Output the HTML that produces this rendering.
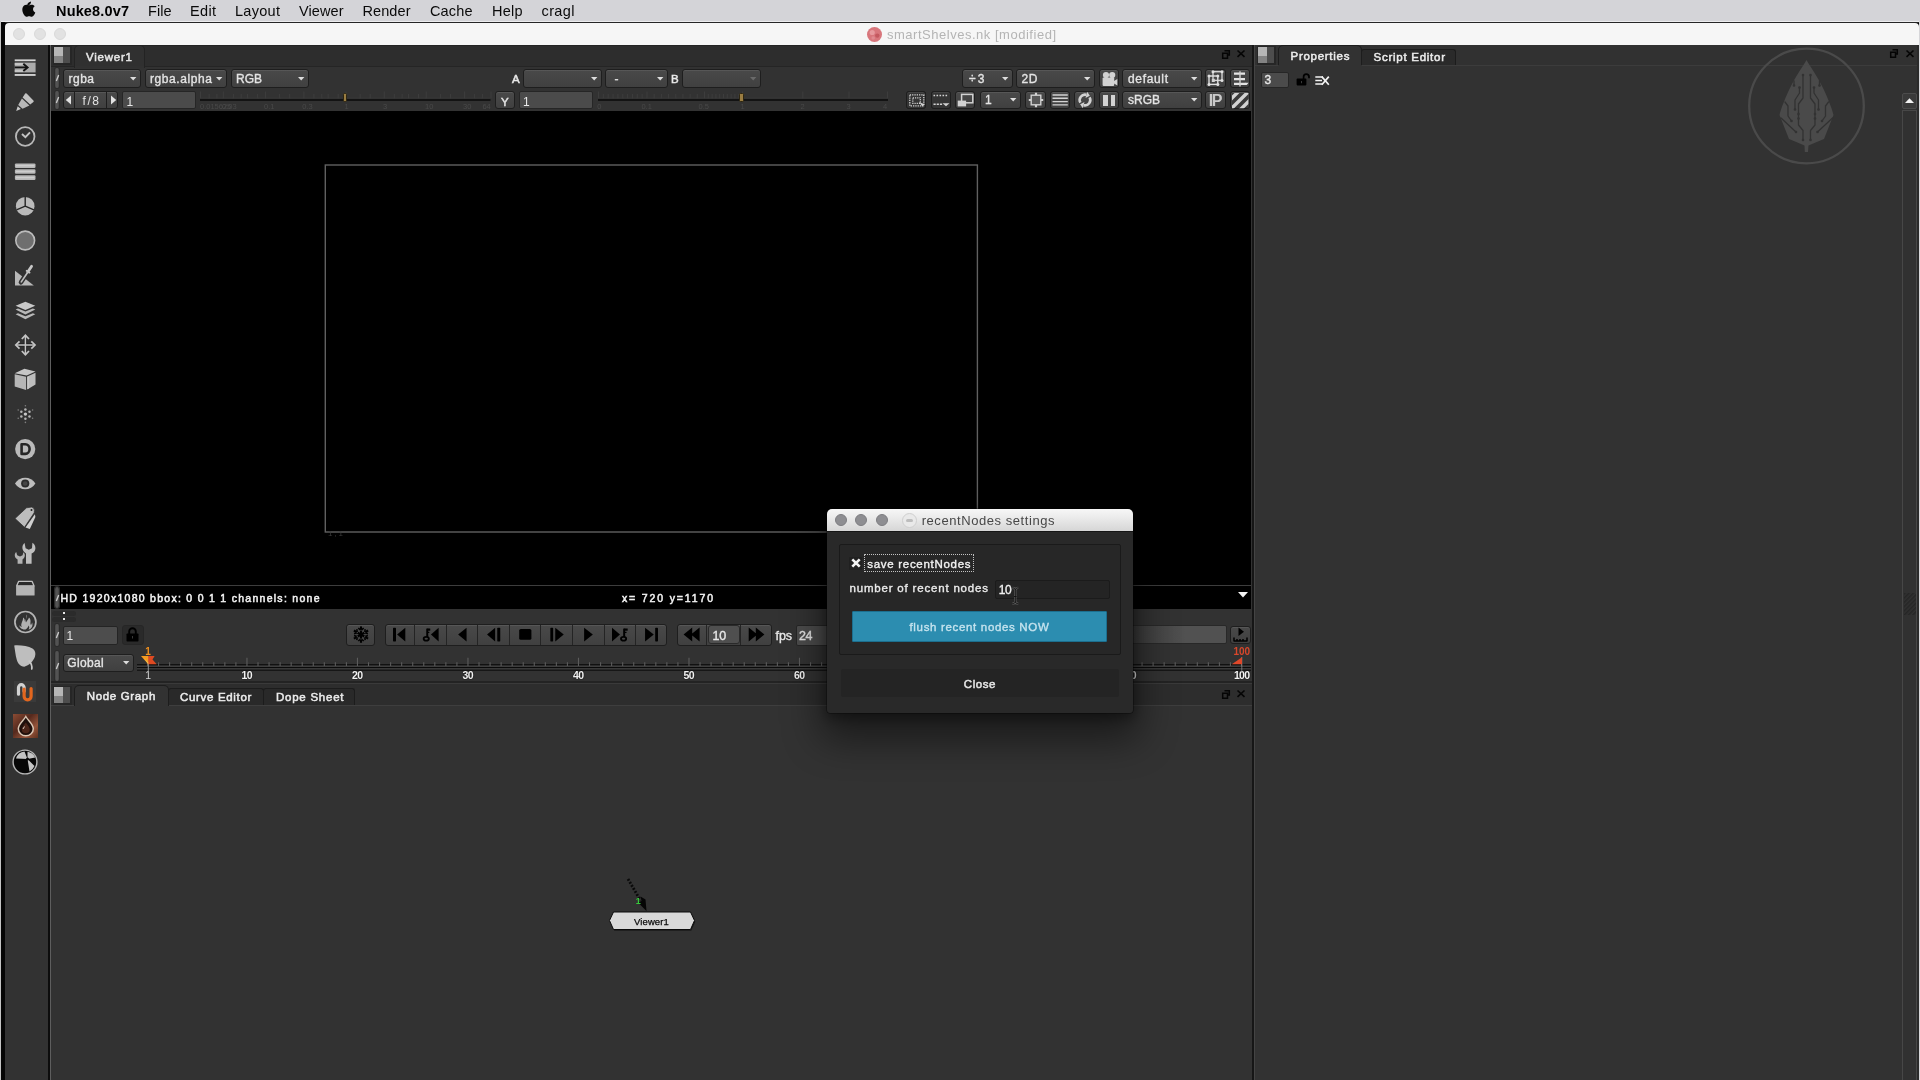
<!DOCTYPE html>
<html><head><meta charset="utf-8"><title>Nuke</title>
<style>
html,body{margin:0;padding:0;width:1920px;height:1080px;overflow:hidden;background:#000;}
body{position:relative;font-family:"Liberation Sans",sans-serif;}
div,span,svg{position:absolute;box-sizing:border-box;}
span{white-space:pre;will-change:opacity;}
svg{overflow:visible;}
.b{background:linear-gradient(#494949,#404040);border:1px solid #1e1e1e;border-radius:3px;box-shadow:inset 0 1px 0 rgba(255,255,255,.08);}
</style></head><body>
<div style="left:0px;top:0px;width:1920px;height:21px;background:#d4d4d8;"></div>
<div style="left:0px;top:20.7px;width:1920px;height:0.6999999999999993px;background:#ececee;"></div>
<div style="left:0px;top:21.5px;width:1919px;height:1.5px;background:#262626;"></div>
<div style="left:1919px;top:21px;width:1px;height:1059px;background:#d6d6d9;"></div>
<div style="left:0px;top:21px;width:1px;height:1059px;background:#c4c4c4;"></div>
<div style="left:1px;top:22px;width:4px;height:1058px;background:#050505;"></div>
<svg style="left:22px;top:1px;" width="14" height="18" viewBox="0 0 14 18"><path d="M9.6 4.3c.7-.9 1.2-2.1 1.1-3.3-1 .1-2.3.7-3 1.6-.7.8-1.3 2-1.1 3.2 1.100.1 2.300-.6 3-1.500zM12.900 9.800c0-2.200 1.800-3.200 1.900-3.300-1-1.500-2.600-1.700-3.200-1.700-1.400-.1-2.700.8-3.300.8-.7 0-1.800-.800-2.900-.800-1.500 0-2.900.9-3.600 2.200-1.600 2.700-.4 6.700 1.100 8.900.700 1.100 1.600 2.300 2.800 2.200 1.100 0 1.500-.7 2.900-.7 1.300 0 1.700.7 2.900.7 1.200 0 2-1.100 2.700-2.200.9-1.200 1.200-2.400 1.200-2.500 0 0-2.400-.9-2.500-3.600z" fill="#0a0a0a" transform="translate(-0.600,-0.500) scale(0.900)"/></svg>
<span style="left:56px;top:3px;font-size:14.5px;line-height:16px;color:#000;font-weight:700;letter-spacing:0.156px;">Nuke8.0v7</span>
<span style="left:148px;top:3px;font-size:14.5px;line-height:16px;color:#0a0a0a;letter-spacing:0.042px;">File</span>
<span style="left:190px;top:3px;font-size:14.5px;line-height:16px;color:#0a0a0a;letter-spacing:0.333px;">Edit</span>
<span style="left:235px;top:3px;font-size:14.5px;line-height:16px;color:#0a0a0a;letter-spacing:0.291px;">Layout</span>
<span style="left:299px;top:3px;font-size:14.5px;line-height:16px;color:#0a0a0a;letter-spacing:0.087px;">Viewer</span>
<span style="left:362.5px;top:3px;font-size:14.5px;line-height:16px;color:#0a0a0a;letter-spacing:0.087px;">Render</span>
<span style="left:430px;top:3px;font-size:14.5px;line-height:16px;color:#0a0a0a;letter-spacing:0.145px;">Cache</span>
<span style="left:492px;top:3px;font-size:14.5px;line-height:16px;color:#0a0a0a;letter-spacing:0.224px;">Help</span>
<span style="left:541.5px;top:3px;font-size:14.5px;line-height:16px;color:#0a0a0a;letter-spacing:0.391px;">cragl</span>
<div style="left:5px;top:23px;width:1914px;height:22px;background:#f6f6f6;border-radius:4px 4px 0 0;"></div>
<div style="left:13px;top:27.700000000000003px;width:12px;height:12px;border-radius:6px;background:#e2e2e2;border:1px solid #dadada"></div>
<div style="left:33.5px;top:27.700000000000003px;width:12px;height:12px;border-radius:6px;background:#e2e2e2;border:1px solid #dadada"></div>
<div style="left:54px;top:27.700000000000003px;width:12px;height:12px;border-radius:6px;background:#e2e2e2;border:1px solid #dadada"></div>
<div style="left:867px;top:26.5px;width:15px;height:15px;border-radius:8px;background:#d8767c;"></div>
<svg style="left:867px;top:26.5px;" width="15" height="15" viewBox="0 0 15 15"><circle cx="5.2" cy="5.5" r="2.6" fill="#e79a9e"/><circle cx="10.3" cy="8.6" r="2.2" fill="#c4585f"/><circle cx="6.2" cy="11" r="1.8" fill="#e08a90"/></svg>
<span style="left:887px;top:27px;font-size:13px;line-height:15px;color:#b4b4b4;letter-spacing:0.517px;">smartShelves.nk [modified]</span>
<div style="left:5px;top:45px;width:1914px;height:1035px;background:#323232;"></div>
<div style="left:48px;top:45px;width:2px;height:1035px;background:#0c0c0c;"></div>
<div style="left:50px;top:45px;width:1px;height:1035px;background:#5e5e5e;"></div>
<div style="left:51px;top:45px;width:1201px;height:22px;background:#2d2d2d;"></div>
<div style="left:51px;top:45px;width:1201px;height:1px;background:#242424;"></div>
<div style="left:51px;top:65.5px;width:1201px;height:1.5px;background:#252525;"></div>
<div style="left:75px;top:46px;width:69px;height:21px;background:#303030;border-radius:4px 4px 0 0;box-shadow:0 0 0 1px #232323;"></div>
<div style="left:75px;top:65.5px;width:69px;height:2.0px;background:#313131;"></div>
<div style="left:52.5px;top:45.5px;width:19.0px;height:19.0px;background:#262626;border-radius:1px;"></div>
<div style="left:54px;top:47px;width:16px;height:16px;background:#4d4d4d;"></div>
<div style="left:54px;top:47px;width:9px;height:9px;background:#b6b6b6;"></div>
<div style="left:54px;top:56px;width:9px;height:7px;background:#838383;"></div>
<span style="left:86px;top:51px;font-size:11.5px;line-height:12px;color:#e8e8e8;letter-spacing:0.776px;-webkit-text-stroke:0.5px;">Viewer1</span>
<svg style="left:1222px;top:49.5px;" width="8" height="9" viewBox="0 0 8 9"><path d="M2.5 0.7H7.3V5.0H5.6M0.7 3.2H5.5V8.2H0.7Z" fill="none" stroke="#050505" stroke-width="1.5"/></svg>
<svg style="left:1237.3px;top:50.2px;" width="8" height="8" viewBox="0 0 8 8"><path d="M0.500 0.500L7.500 6.900M7.500 0.500L0.500 6.900" stroke="#050505" stroke-width="1.600"/></svg>
<div style="left:55.3px;top:68px;width:4.200px;height:20px;border-radius:2.500px;background:linear-gradient(90deg,#444,#585858 50%,#444);box-shadow:0 0 0 1px #2b2b2b;"></div>
<svg style="left:55px;top:73.0px;" width="5" height="10" viewBox="0 0 5 10"><path d="M3.500 2.600L1.500 7.400" stroke="#c8c8c8" stroke-width="1.400" stroke-linecap="round"/></svg>
<div class="b" style="left:63px;top:68.6px;width:78px;height:19.400000000000006px;"></div>
<span style="left:68.5px;top:72px;font-size:12px;line-height:14px;color:#e4e4e4;letter-spacing:0.490px;-webkit-text-stroke:0.35px;">rgba</span>
<svg style="left:129.60000000000002px;top:76.7px;" width="6.4" height="3.6" viewBox="0 0 6.4 3.6"><path d="M0 0H6.4L3.2 3.6Z" fill="#ddd"/></svg>
<div class="b" style="left:145px;top:68.6px;width:82px;height:19.400000000000006px;"></div>
<span style="left:150px;top:72px;font-size:12px;line-height:14px;color:#e4e4e4;letter-spacing:0.587px;-webkit-text-stroke:0.35px;">rgba.alpha</span>
<svg style="left:216.0px;top:76.7px;" width="6.4" height="3.6" viewBox="0 0 6.4 3.6"><path d="M0 0H6.4L3.2 3.6Z" fill="#ddd"/></svg>
<div class="b" style="left:231px;top:68.6px;width:78px;height:19.400000000000006px;"></div>
<span style="left:236px;top:72px;font-size:12px;line-height:14px;color:#e4e4e4;letter-spacing:-0.008px;-webkit-text-stroke:0.35px;">RGB</span>
<svg style="left:297.6px;top:76.7px;" width="6.4" height="3.6" viewBox="0 0 6.4 3.6"><path d="M0 0H6.4L3.2 3.6Z" fill="#ddd"/></svg>
<span style="left:512px;top:73px;font-size:11.5px;line-height:12px;color:#e8e8e8;letter-spacing:0.000px;-webkit-text-stroke:0.5px;">A</span>
<div class="b" style="left:523px;top:68.6px;width:79px;height:19.400000000000006px;"></div>
<svg style="left:590.5999999999999px;top:76.7px;" width="6.4" height="3.6" viewBox="0 0 6.4 3.6"><path d="M0 0H6.4L3.2 3.6Z" fill="#ddd"/></svg>
<div class="b" style="left:605px;top:68.6px;width:63px;height:19.400000000000006px;"></div>
<span style="left:614.5px;top:72px;font-size:12px;line-height:14px;color:#e4e4e4;letter-spacing:0.000px;-webkit-text-stroke:0.35px;">-</span>
<svg style="left:656.5999999999999px;top:76.7px;" width="6.4" height="3.6" viewBox="0 0 6.4 3.6"><path d="M0 0H6.4L3.2 3.6Z" fill="#ddd"/></svg>
<span style="left:671px;top:73px;font-size:11.5px;line-height:12px;color:#e8e8e8;letter-spacing:0.000px;-webkit-text-stroke:0.5px;">B</span>
<div class="b" style="left:682px;top:68.6px;width:79px;height:19.400000000000006px;"></div>
<svg style="left:749.5999999999999px;top:76.7px;" width="6.4" height="3.6" viewBox="0 0 6.4 3.6"><path d="M0 0H6.4L3.2 3.6Z" fill="#6a6a6a"/></svg>
<div class="b" style="left:962px;top:68.6px;width:51px;height:19.400000000000006px;"></div>
<span style="left:969px;top:72px;font-size:12px;line-height:14px;color:#e4e4e4;letter-spacing:2.234px;-webkit-text-stroke:0.35px;">÷3</span>
<svg style="left:1001.5999999999999px;top:76.7px;" width="6.4" height="3.6" viewBox="0 0 6.4 3.6"><path d="M0 0H6.4L3.2 3.6Z" fill="#ddd"/></svg>
<div class="b" style="left:1016px;top:68.6px;width:79px;height:19.400000000000006px;"></div>
<span style="left:1021.5px;top:72px;font-size:12px;line-height:14px;color:#e4e4e4;letter-spacing:0.656px;-webkit-text-stroke:0.35px;">2D</span>
<svg style="left:1083.6px;top:76.7px;" width="6.4" height="3.6" viewBox="0 0 6.4 3.6"><path d="M0 0H6.4L3.2 3.6Z" fill="#ddd"/></svg>
<div class="b" style="left:1099px;top:68.6px;width:20px;height:19.400000000000006px;"></div>
<div class="b" style="left:1122px;top:68.6px;width:80px;height:19.400000000000006px;"></div>
<span style="left:1128px;top:72px;font-size:12px;line-height:14px;color:#e4e4e4;letter-spacing:0.661px;-webkit-text-stroke:0.35px;">default</span>
<svg style="left:1190.6px;top:76.7px;" width="6.4" height="3.6" viewBox="0 0 6.4 3.6"><path d="M0 0H6.4L3.2 3.6Z" fill="#ddd"/></svg>
<div class="b" style="left:1205px;top:68.6px;width:21px;height:19.400000000000006px;"></div>
<div class="b" style="left:1230px;top:68.6px;width:20px;height:19.400000000000006px;"></div>
<div style="left:55.3px;top:91px;width:4.200px;height:18px;border-radius:2.500px;background:linear-gradient(90deg,#444,#585858 50%,#444);box-shadow:0 0 0 1px #2b2b2b;"></div>
<svg style="left:55px;top:95.0px;" width="5" height="10" viewBox="0 0 5 10"><path d="M3.500 2.600L1.500 7.400" stroke="#c8c8c8" stroke-width="1.400" stroke-linecap="round"/></svg>
<div class="b" style="left:63px;top:91px;width:12px;height:18px;border-radius:3px 0 0 3px;"></div>
<div class="b" style="left:74px;top:91px;width:33px;height:18px;border-radius:0;"></div>
<div class="b" style="left:106px;top:91px;width:12px;height:18px;border-radius:0 3px 3px 0;"></div>
<svg style="left:65px;top:95px;" width="7" height="10" viewBox="0 0 7 10"><path d="M6 0.5V9.5L0.8 5Z" fill="#e2e2e2"/></svg>
<svg style="left:109.5px;top:95px;" width="7" height="10" viewBox="0 0 7 10"><path d="M1 0.5V9.5L6.2 5Z" fill="#e2e2e2"/></svg>
<span style="left:82.5px;top:94px;font-size:12px;line-height:14px;color:#e4e4e4;letter-spacing:1.578px;">f/8</span>
<div style="left:122px;top:91px;width:74px;height:18px;background:#4b4b4b;border:1px solid #262626;border-radius:2px;"></div>
<span style="left:126.5px;top:95px;font-size:12px;line-height:14px;color:#e8e8e8;letter-spacing:0.000px;">1</span>
<div class="b" style="left:495px;top:91px;width:20px;height:18px;"></div>
<span style="left:501px;top:96px;font-size:11.5px;line-height:12px;color:#e0e0e0;letter-spacing:0.000px;-webkit-text-stroke:0.5px;">Y</span>
<div style="left:519px;top:91px;width:74px;height:18px;background:#4b4b4b;border:1px solid #262626;border-radius:2px;"></div>
<span style="left:523px;top:95px;font-size:12px;line-height:14px;color:#e8e8e8;letter-spacing:0.000px;">1</span>
<svg style="left:199.5px;top:0px;" width="292.5" height="110" viewBox="0 0 292.5 110"><path d="M0.50 91.5V98.5" stroke="#3d3d3d" stroke-width="1"/><path d="M9.14 94V98.5" stroke="#3d3d3d" stroke-width="1"/><path d="M16.94 94V98.5" stroke="#3d3d3d" stroke-width="1"/><path d="M23.32 91.5V98.5" stroke="#3d3d3d" stroke-width="1"/><path d="M33.39 94V98.5" stroke="#3d3d3d" stroke-width="1"/><path d="M41.19 94V98.5" stroke="#3d3d3d" stroke-width="1"/><path d="M47.57 94V98.5" stroke="#3d3d3d" stroke-width="1"/><path d="M57.64 94V98.5" stroke="#3d3d3d" stroke-width="1"/><path d="M65.44 91.5V98.5" stroke="#3d3d3d" stroke-width="1"/><path d="M79.63 94V98.5" stroke="#3d3d3d" stroke-width="1"/><path d="M89.69 94V98.5" stroke="#3d3d3d" stroke-width="1"/><path d="M103.88 91.5V98.5" stroke="#3d3d3d" stroke-width="1"/><path d="M113.94 94V98.5" stroke="#3d3d3d" stroke-width="1"/><path d="M121.75 94V98.5" stroke="#3d3d3d" stroke-width="1"/><path d="M128.13 94V98.5" stroke="#3d3d3d" stroke-width="1"/><path d="M138.19 94V98.5" stroke="#3d3d3d" stroke-width="1"/><path d="M146.00 91.5V98.5" stroke="#3d3d3d" stroke-width="1"/><path d="M160.14 94V98.5" stroke="#3d3d3d" stroke-width="1"/><path d="M170.17 94V98.5" stroke="#3d3d3d" stroke-width="1"/><path d="M184.30 91.5V98.5" stroke="#3d3d3d" stroke-width="1"/><path d="M194.33 94V98.5" stroke="#3d3d3d" stroke-width="1"/><path d="M202.11 94V98.5" stroke="#3d3d3d" stroke-width="1"/><path d="M208.47 94V98.5" stroke="#3d3d3d" stroke-width="1"/><path d="M218.50 94V98.5" stroke="#3d3d3d" stroke-width="1"/><path d="M226.28 91.5V98.5" stroke="#3d3d3d" stroke-width="1"/><path d="M240.42 94V98.5" stroke="#3d3d3d" stroke-width="1"/><path d="M250.45 94V98.5" stroke="#3d3d3d" stroke-width="1"/><path d="M264.58 91.5V98.5" stroke="#3d3d3d" stroke-width="1"/><path d="M274.61 94V98.5" stroke="#3d3d3d" stroke-width="1"/><path d="M282.39 94V98.5" stroke="#3d3d3d" stroke-width="1"/><path d="M291.00 91.5V98.5" stroke="#3d3d3d" stroke-width="1"/><path d="M0 99.8H290.5" stroke="#131313" stroke-width="2.2"/><path d="M0 98.2H290.5" stroke="#3e3e3e" stroke-width="0.8"/></svg>
<span style="left:200px;top:102px;font-size:7.5px;line-height:9px;color:#494949;letter-spacing:0.000px;">0.015625</span>
<span style="left:222px;top:102px;font-size:7.5px;line-height:9px;color:#494949;letter-spacing:0.000px;">0.03</span>
<span style="left:264px;top:102px;font-size:7.5px;line-height:9px;color:#494949;letter-spacing:0.000px;">0.1</span>
<span style="left:302.3px;top:102px;font-size:7.5px;line-height:9px;color:#494949;letter-spacing:0.000px;">0.3</span>
<span style="left:344.5px;top:102px;font-size:7.5px;line-height:9px;color:#494949;letter-spacing:0.000px;">1</span>
<span style="left:383px;top:102px;font-size:7.5px;line-height:9px;color:#494949;letter-spacing:0.000px;">3</span>
<span style="left:425px;top:102px;font-size:7.5px;line-height:9px;color:#494949;letter-spacing:0.000px;">10</span>
<span style="left:463px;top:102px;font-size:7.5px;line-height:9px;color:#494949;letter-spacing:0.000px;">30</span>
<span style="left:482.4px;top:102px;font-size:7.5px;line-height:9px;color:#494949;letter-spacing:0.000px;">64</span>
<div style="left:342.6px;top:93.2px;width:4.399999999999977px;height:9.200000000000003px;background:#9a7d42;border:1px solid #2e2610;border-radius:1.5px;"></div>
<svg style="left:597.5px;top:0px;" width="292.0" height="110" viewBox="0 0 292.0 110"><path d="M0.50 91.5V98.5" stroke="#3d3d3d" stroke-width="1"/><path d="M5.35 94V98.5" stroke="#3d3d3d" stroke-width="1"/><path d="M10.20 94V98.5" stroke="#3d3d3d" stroke-width="1"/><path d="M15.05 94V98.5" stroke="#3d3d3d" stroke-width="1"/><path d="M19.90 94V98.5" stroke="#3d3d3d" stroke-width="1"/><path d="M24.75 94V98.5" stroke="#3d3d3d" stroke-width="1"/><path d="M29.60 94V98.5" stroke="#3d3d3d" stroke-width="1"/><path d="M34.45 94V98.5" stroke="#3d3d3d" stroke-width="1"/><path d="M39.30 94V98.5" stroke="#3d3d3d" stroke-width="1"/><path d="M44.15 94V98.5" stroke="#3d3d3d" stroke-width="1"/><path d="M49.00 91.5V98.5" stroke="#3d3d3d" stroke-width="1"/><path d="M56.19 94V98.5" stroke="#3d3d3d" stroke-width="1"/><path d="M63.38 94V98.5" stroke="#3d3d3d" stroke-width="1"/><path d="M70.56 94V98.5" stroke="#3d3d3d" stroke-width="1"/><path d="M77.75 94V98.5" stroke="#3d3d3d" stroke-width="1"/><path d="M84.94 94V98.5" stroke="#3d3d3d" stroke-width="1"/><path d="M92.12 94V98.5" stroke="#3d3d3d" stroke-width="1"/><path d="M99.31 94V98.5" stroke="#3d3d3d" stroke-width="1"/><path d="M106.50 91.5V98.5" stroke="#3d3d3d" stroke-width="1"/><path d="M110.30 94V98.5" stroke="#3d3d3d" stroke-width="1"/><path d="M114.10 94V98.5" stroke="#3d3d3d" stroke-width="1"/><path d="M117.90 94V98.5" stroke="#3d3d3d" stroke-width="1"/><path d="M121.70 94V98.5" stroke="#3d3d3d" stroke-width="1"/><path d="M125.50 94V98.5" stroke="#3d3d3d" stroke-width="1"/><path d="M129.30 94V98.5" stroke="#3d3d3d" stroke-width="1"/><path d="M133.10 94V98.5" stroke="#3d3d3d" stroke-width="1"/><path d="M136.90 94V98.5" stroke="#3d3d3d" stroke-width="1"/><path d="M140.70 94V98.5" stroke="#3d3d3d" stroke-width="1"/><path d="M144.50 91.5V98.5" stroke="#3d3d3d" stroke-width="1"/><path d="M204.80 91.5V98.5" stroke="#3d3d3d" stroke-width="1"/><path d="M251.00 91.5V98.5" stroke="#3d3d3d" stroke-width="1"/><path d="M289.50 91.5V98.5" stroke="#3d3d3d" stroke-width="1"/><path d="M0 99.8H290.0" stroke="#131313" stroke-width="2.2"/><path d="M0 98.2H290.0" stroke="#3e3e3e" stroke-width="0.8"/></svg>
<span style="left:597.3px;top:102px;font-size:7.5px;line-height:9px;color:#494949;letter-spacing:0.000px;">0</span>
<span style="left:641.4px;top:102px;font-size:7.5px;line-height:9px;color:#494949;letter-spacing:0.000px;">0.1</span>
<span style="left:698.6px;top:102px;font-size:7.5px;line-height:9px;color:#494949;letter-spacing:0.000px;">0.5</span>
<span style="left:740.5px;top:102px;font-size:7.5px;line-height:9px;color:#494949;letter-spacing:0.000px;">1</span>
<span style="left:800.5px;top:102px;font-size:7.5px;line-height:9px;color:#494949;letter-spacing:0.000px;">2</span>
<span style="left:846.5px;top:102px;font-size:7.5px;line-height:9px;color:#494949;letter-spacing:0.000px;">3</span>
<span style="left:883px;top:102px;font-size:7.5px;line-height:9px;color:#494949;letter-spacing:0.000px;">4</span>
<div style="left:739.4px;top:93.2px;width:4.400000000000091px;height:9.200000000000003px;background:#9a7d42;border:1px solid #2e2610;border-radius:1.5px;"></div>
<div class="b" style="left:906px;top:91px;width:20px;height:18px;"></div>
<div class="b" style="left:931px;top:91px;width:20px;height:18px;"></div>
<div class="b" style="left:955px;top:91px;width:20px;height:18px;"></div>
<div class="b" style="left:1025px;top:91px;width:21px;height:18px;"></div>
<div class="b" style="left:1050px;top:91px;width:20px;height:18px;"></div>
<div class="b" style="left:1074px;top:91px;width:21px;height:18px;"></div>
<div class="b" style="left:1099px;top:91px;width:20px;height:18px;"></div>
<div class="b" style="left:1205px;top:91px;width:21px;height:18px;"></div>
<div class="b" style="left:1230px;top:91px;width:20px;height:18px;"></div>
<div class="b" style="left:980px;top:91px;width:41px;height:18px;"></div>
<span style="left:985px;top:93px;font-size:12px;line-height:14px;color:#e4e4e4;letter-spacing:0.000px;-webkit-text-stroke:0.35px;">1</span>
<svg style="left:1009.5999999999999px;top:98.4px;" width="6.4" height="3.6" viewBox="0 0 6.4 3.6"><path d="M0 0H6.4L3.2 3.6Z" fill="#ddd"/></svg>
<div class="b" style="left:1122px;top:91px;width:80px;height:18px;"></div>
<span style="left:1128px;top:93px;font-size:12px;line-height:14px;color:#e4e4e4;letter-spacing:-0.005px;-webkit-text-stroke:0.35px;">sRGB</span>
<svg style="left:1190.6px;top:98.4px;" width="6.4" height="3.6" viewBox="0 0 6.4 3.6"><path d="M0 0H6.4L3.2 3.6Z" fill="#ddd"/></svg>
<div style="left:51px;top:111px;width:1199.5px;height:474px;background:#000;"></div>
<div style="left:51px;top:585px;width:1199.5px;height:1px;background:#3d3d3d;"></div>
<div style="left:51px;top:586px;width:1199.5px;height:23px;background:#000;"></div>
<svg style="left:320px;top:160px;" width="662" height="378" viewBox="0 0 662 378"><rect x="5.300" y="5" width="652.100" height="367" fill="none" stroke="#606060" stroke-width="1.400"/></svg>
<span style="left:328px;top:529px;font-size:8px;line-height:9px;color:#3a3a3a;letter-spacing:1.938px;">1,1</span>
<div style="left:55.3px;top:587px;width:4.200px;height:21px;border-radius:2.500px;background:linear-gradient(90deg,#444,#585858 50%,#444);box-shadow:0 0 0 1px #2b2b2b;"></div>
<svg style="left:55px;top:592.5px;" width="5" height="10" viewBox="0 0 5 10"><path d="M3.500 2.600L1.500 7.400" stroke="#c8c8c8" stroke-width="1.400" stroke-linecap="round"/></svg>
<span style="left:60.5px;top:592px;font-size:10.5px;line-height:12px;color:#f2f2f2;letter-spacing:1.279px;-webkit-text-stroke:0.5px;">HD 1920x1080 bbox: 0 0 1 1 channels: none</span>
<span style="left:622px;top:592px;font-size:10.5px;line-height:12px;color:#f2f2f2;letter-spacing:1.858px;-webkit-text-stroke:0.5px;">x= 720 y=1170</span>
<svg style="left:1237.5px;top:592.3px;" width="10" height="6" viewBox="0 0 10 6"><path d="M0 0H10L5 5.6Z" fill="#f4f4f4"/></svg>
<div style="left:1252px;top:45px;width:2px;height:1035px;background:#161616;"></div>
<div style="left:1254px;top:45px;width:1px;height:1035px;background:#444;"></div>
<svg style="left:1101.5px;top:70.5px;" width="16" height="16" viewBox="0 0 16 16"><circle cx="4" cy="4" r="3.1" fill="#d2d2d2"/><circle cx="10.2" cy="4" r="3.1" fill="#d2d2d2"/><rect x="0.6" y="6.4" width="11.6" height="8.6" rx="1" fill="#d2d2d2"/><path d="M12 10L15.3 8V14.600L12 12.600Z" fill="#d2d2d2"/></svg>
<svg style="left:1207px;top:70px;" width="17" height="17" viewBox="0 0 17 17"><rect x="6" y="1.700" width="9" height="8.700" fill="none" stroke="#d2d2d2" stroke-width="1.400"/><rect x="2" y="6" width="8.800" height="8.400" fill="none" stroke="#e0e0e0" stroke-width="1.400"/><circle cx="6" cy="1.7" r="1.500" fill="#e0e0e0"/><circle cx="15" cy="1.7" r="1.500" fill="#e0e0e0"/><circle cx="15" cy="10.4" r="1.500" fill="#e0e0e0"/><circle cx="2" cy="6" r="1.500" fill="#e0e0e0"/><circle cx="2" cy="14.4" r="1.500" fill="#e0e0e0"/><circle cx="10.8" cy="14.4" r="1.500" fill="#e0e0e0"/><circle cx="10.8" cy="6" r="1.500" fill="#e0e0e0"/><rect x="4.800" y="8.800" width="3" height="3.200" fill="#d2d2d2"/></svg>
<svg style="left:1233px;top:70.5px;" width="16" height="16" viewBox="0 0 16 16"><path d="M1 2.600H12M1 8.100H12M1 12.900H12.500" stroke="#e4e4e4" stroke-width="2.400"/><path d="M12 11.700H15.600L13.700 14.100H12Z" fill="#e4e4e4"/><path d="M7 0.300V15.600" stroke="#d2d2d2" stroke-width="1.400"/></svg>
<div class="b" style="left:906px;top:91px;width:20px;height:18px;background:#353535;"></div>
<div class="b" style="left:931px;top:91px;width:20px;height:18px;background:#353535;"></div>
<svg style="left:909px;top:93.5px;" width="16" height="13" viewBox="0 0 16 13"><rect x="0.8" y="0.8" width="14" height="11" fill="none" stroke="#d2d2d2" stroke-width="1.3" stroke-dasharray="1.300 1"/><rect x="3.800" y="3.800" width="7.500" height="5.500" fill="none" stroke="#d2d2d2" stroke-width="1.200" stroke-dasharray="1.200 1"/><path d="M10 8L15.500 10.200L13.500 12.500Z" fill="#d2d2d2"/></svg>
<svg style="left:933px;top:93px;" width="17" height="14" viewBox="0 0 17 14"><path d="M0.500 2.500H15.500" stroke="#d2d2d2" stroke-width="1.500" stroke-dasharray="1.600 1.400"/><path d="M0.500 11.200H10" stroke="#d2d2d2" stroke-width="1.400" stroke-dasharray="2.200 1"/><path d="M9.500 10.200H16.500L13 13.200Z" fill="#d2d2d2"/></svg>
<svg style="left:957px;top:93px;" width="17" height="14" viewBox="0 0 17 14"><rect x="4.600" y="1.400" width="11.200" height="8.400" fill="none" stroke="#d2d2d2" stroke-width="1.500"/><rect x="0.700" y="7.600" width="8.400" height="5.800" fill="#d2d2d2"/></svg>
<svg style="left:1028px;top:92px;" width="16" height="16" viewBox="0 0 16 16"><rect x="3.200" y="3.200" width="9.600" height="9.600" fill="#585858" stroke="#d2d2d2" stroke-width="1.400"/><path d="M8 0.800V3M8 13V15.200M0.800 8H3M13 8H15.200" stroke="#d2d2d2" stroke-width="2.200"/></svg>
<svg style="left:1052px;top:93px;" width="17" height="14" viewBox="0 0 17 14"><path d="M0.500 2H15.800M0.500 5.300H15.800M0.500 8.600H15.800M0.500 11.900H15.800" stroke="#d2d2d2" stroke-width="1.400"/></svg>
<svg style="left:1076.8px;top:91.8px;" width="16" height="16" viewBox="0 0 16 16"><path d="M3.41 10.65A5.300 5.300 0 0 1 9.37 2.88" fill="none" stroke="#d2d2d2" stroke-width="2.600"/><path d="M10.23 -0.31L12.85 3.81L8.52 6.07Z" fill="#d2d2d2"/><path d="M12.59 5.35A5.300 5.300 0 0 1 6.63 13.12" fill="none" stroke="#d2d2d2" stroke-width="2.600"/><path d="M5.77 16.31L3.15 12.19L7.48 9.93Z" fill="#d2d2d2"/></svg>
<div style="left:1103px;top:94.5px;width:4.5px;height:11.5px;background:#d2d2d2;"></div>
<div style="left:1110.8px;top:94.5px;width:4.600000000000136px;height:11.5px;background:#d2d2d2;"></div>
<span style="left:1208.8px;top:92px;font-size:16px;line-height:17px;color:#cacaca;font-weight:700;letter-spacing:-1.425px;">IP</span>
<svg style="left:1232px;top:92.8px;" width="16.4" height="15.2" viewBox="0 0 16.4 15.2"><defs><clipPath id="sc"><rect x="0" y="0" width="16.400" height="15.200"/></clipPath></defs><g clip-path="url(#sc)"><rect width="16.400" height="15.200" fill="#3a3a3a"/><path d="M-4 9L9 -4M-2 17L17 -2M6 19L19 6" stroke="#d2d2d2" stroke-width="3.400"/></g></svg>
<div style="left:52px;top:610.500px;width:24px;height:5px;border-radius:3px;background:#2b2b2b;"></div>
<div style="left:52px;top:616.500px;width:24px;height:5px;border-radius:3px;background:#2b2b2b;"></div>
<div style="left:63.3px;top:612px;width:1.7000000000000028px;height:1.6000000000000227px;background:#e8e8e8;"></div>
<div style="left:63.3px;top:618px;width:1.7000000000000028px;height:1.6000000000000227px;background:#e8e8e8;"></div>
<div style="left:55.3px;top:624px;width:4.200px;height:22px;border-radius:2.500px;background:linear-gradient(90deg,#444,#585858 50%,#444);box-shadow:0 0 0 1px #2b2b2b;"></div>
<svg style="left:55px;top:630.0px;" width="5" height="10" viewBox="0 0 5 10"><path d="M3.500 2.600L1.500 7.400" stroke="#c8c8c8" stroke-width="1.400" stroke-linecap="round"/></svg>
<div style="left:63px;top:625.5px;width:55px;height:19.0px;background:#4d4d4d;border:1px solid #242424;border-radius:2px;"></div>
<span style="left:66.5px;top:629px;font-size:12px;line-height:14px;color:#e8e8e8;letter-spacing:0.000px;">1</span>
<div style="left:121.5px;top:624.5px;width:22.0px;height:20.0px;background:#2a2a2a;border:1px solid #262626;border-radius:3px;"></div>
<svg style="left:125px;top:627px;" width="15" height="15" viewBox="0 0 15 15"><rect x="1.500" y="6.500" width="12" height="8" rx="0.800" fill="#000"/><path d="M4.200 7V4.600A3.300 3.300 0 0 1 10.800 4.600V7" fill="none" stroke="#000" stroke-width="1.900"/><rect x="7" y="9" width="1" height="2.500" fill="#3a3a3a"/></svg>
<div class="b" style="left:345.5px;top:624.4px;width:29.5px;height:21.800000000000068px;"></div>
<svg style="left:352.6px;top:626px;" width="16" height="17.2" viewBox="0 0 16 17.2"><g transform="rotate(0 8 8.6)"><path d="M8 8.6V0.4" stroke="#000" stroke-width="2.1"/><path d="M8 4.4L5.3 2.2M8 4.4L10.7 2.2" stroke="#000" stroke-width="1.5"/></g><g transform="rotate(60 8 8.6)"><path d="M8 8.6V0.4" stroke="#000" stroke-width="2.1"/><path d="M8 4.4L5.3 2.2M8 4.4L10.7 2.2" stroke="#000" stroke-width="1.5"/></g><g transform="rotate(120 8 8.6)"><path d="M8 8.6V0.4" stroke="#000" stroke-width="2.1"/><path d="M8 4.4L5.3 2.2M8 4.4L10.7 2.2" stroke="#000" stroke-width="1.5"/></g><g transform="rotate(180 8 8.6)"><path d="M8 8.6V0.4" stroke="#000" stroke-width="2.1"/><path d="M8 4.4L5.3 2.2M8 4.4L10.7 2.2" stroke="#000" stroke-width="1.5"/></g><g transform="rotate(240 8 8.6)"><path d="M8 8.6V0.4" stroke="#000" stroke-width="2.1"/><path d="M8 4.4L5.3 2.2M8 4.4L10.7 2.2" stroke="#000" stroke-width="1.5"/></g><g transform="rotate(300 8 8.6)"><path d="M8 8.6V0.4" stroke="#000" stroke-width="2.1"/><path d="M8 4.4L5.3 2.2M8 4.4L10.7 2.2" stroke="#000" stroke-width="1.5"/></g><circle cx="8" cy="8.6" r="2.2" fill="#000"/><circle cx="11.72" cy="10.75" r="0.65" fill="#4a4a4a"/><circle cx="8.00" cy="12.90" r="0.65" fill="#4a4a4a"/><circle cx="4.28" cy="10.75" r="0.65" fill="#4a4a4a"/><circle cx="4.28" cy="6.45" r="0.65" fill="#4a4a4a"/><circle cx="8.00" cy="4.30" r="0.65" fill="#4a4a4a"/><circle cx="11.72" cy="6.45" r="0.65" fill="#4a4a4a"/></svg>
<div class="b" style="left:384.5px;top:624.4px;width:282.4px;height:21.8px;"></div>
<div style="left:414.0px;top:625.4px;width:1.1000000000000227px;height:19.800000000000068px;background:#242424;"></div>
<div style="left:445.9px;top:625.4px;width:1.1000000000000227px;height:19.800000000000068px;background:#242424;"></div>
<div style="left:476.8px;top:625.4px;width:1.1000000000000227px;height:19.800000000000068px;background:#242424;"></div>
<div style="left:508.9px;top:625.4px;width:1.1000000000000227px;height:19.800000000000068px;background:#242424;"></div>
<div style="left:540.3px;top:625.4px;width:1.1000000000000227px;height:19.800000000000068px;background:#242424;"></div>
<div style="left:572.2px;top:625.4px;width:1.1000000000000227px;height:19.800000000000068px;background:#242424;"></div>
<div style="left:603.5px;top:625.4px;width:1.1000000000000227px;height:19.800000000000068px;background:#242424;"></div>
<div style="left:635.25px;top:625.4px;width:1.1000000000000227px;height:19.800000000000068px;background:#242424;"></div>
<svg style="left:0px;top:0px;" width="700" height="660" viewBox="0 0 700 660"><rect x="393.00" y="627.8" width="3.00" height="13.60" rx="0.6" fill="#000"/><path d="M405.30 627.8V641.4L397.10 634.6Z" fill="#000"/><ellipse cx="426.25" cy="638.7" rx="2.6" ry="1.9" fill="none" stroke="#000" stroke-width="1.8"/><path d="M427.25 637V628.6" stroke="#000" stroke-width="2"/><path d="M427.25 629.6H430.25" stroke="#000" stroke-width="2.2"/><path d="M427.25 632.4H429.35" stroke="#000" stroke-width="1.2"/><path d="M438.65 627.8V641.4L430.95 634.6Z" fill="#000"/><path d="M466.55 627.8V641.4L458.15 634.6Z" fill="#000"/><path d="M495.15 627.8V641.4L487.05 634.6Z" fill="#000"/><rect x="497.25" y="627.8" width="3.00" height="13.60" rx="0.6" fill="#000"/><rect x="519.2" y="629" width="12.2" height="10.8" rx="1.6" fill="#000"/><rect x="550.35" y="627.8" width="2.80" height="13.60" rx="0.6" fill="#000"/><path d="M555.25 627.8V641.4L563.75 634.6Z" fill="#000"/><path d="M584.15 627.8V641.4L592.85 634.6Z" fill="#000"/><path d="M611.98 627.8V641.4L619.98 634.6Z" fill="#000"/><ellipse cx="623.58" cy="638.7" rx="2.6" ry="1.9" fill="none" stroke="#000" stroke-width="1.8"/><path d="M624.17 637V628.6" stroke="#000" stroke-width="2"/><path d="M624.17 629.6H627.67" stroke="#000" stroke-width="2.2"/><path d="M624.17 632.4H626.52" stroke="#000" stroke-width="1.2"/><path d="M645.08 627.8V641.4L653.78 634.6Z" fill="#000"/><rect x="655.18" y="627.8" width="2.80" height="13.60" rx="0.6" fill="#000"/></svg>
<div class="b" style="left:676.500px;top:624.200px;width:95.79999999999995px;height:22px;"></div>
<div style="left:705.6px;top:625.2px;width:1.1000000000000227px;height:20.0px;background:#242424;"></div>
<div style="left:739.8px;top:625.2px;width:1.1000000000000227px;height:20.0px;background:#242424;"></div>
<div style="left:707.8px;top:625.2px;width:31.800000000000068px;height:19.0px;background:#4f4f4f;border:1px solid #2a2a2a;border-radius:3px;"></div>
<svg style="left:0px;top:0px;" width="800" height="660" viewBox="0 0 800 660"><path d="M692.200 627.400V641.400L683.600 634.400ZM699.600 627.400V641.400L691 634.400Z" fill="#000"/><path d="M748.700 627.400V641.400L757.300 634.400ZM755.800 627.400V641.400L764.400 634.400Z" fill="#000"/></svg>
<span style="left:712.6px;top:629px;font-size:12.5px;line-height:14px;color:#e8e8e8;letter-spacing:-0.206px;-webkit-text-stroke:0.35px;">10</span>
<span style="left:775.5px;top:629px;font-size:12.5px;line-height:14px;color:#e8e8e8;letter-spacing:-0.094px;-webkit-text-stroke:0.35px;">fps</span>
<div style="left:795.6px;top:625px;width:54.39999999999998px;height:21px;background:#4c4c4c;border:1px solid #262626;border-radius:2px;"></div>
<span style="left:798.9px;top:629px;font-size:12.5px;line-height:14px;color:#e4e4e4;letter-spacing:-0.306px;-webkit-text-stroke:0.35px;">24</span>
<div style="left:1090px;top:624.5px;width:136.5px;height:19.0px;background:linear-gradient(90deg,#3a3a3a 0%,#3a3a3a 30%,#515151 70%);border:1px solid #282828;border-radius:2px;"></div>
<div class="b" style="left:1230px;top:625.5px;width:20.5px;height:18.5px;"></div>
<svg style="left:1232px;top:627px;" width="17" height="16" viewBox="0 0 17 16"><path d="M6.500 0.500V9L12 4.700Z" fill="#000"/><path d="M1.500 14H15.500M2 14V10.500M5 14V12M8 14V12M11 14V12M15 14V10.500" stroke="#000" stroke-width="1.500" fill="none"/></svg>
<div style="left:55.3px;top:651px;width:4.200px;height:30px;border-radius:2.500px;background:linear-gradient(90deg,#444,#585858 50%,#444);box-shadow:0 0 0 1px #2b2b2b;"></div>
<svg style="left:55px;top:661.0px;" width="5" height="10" viewBox="0 0 5 10"><path d="M3.500 2.600L1.500 7.400" stroke="#c8c8c8" stroke-width="1.400" stroke-linecap="round"/></svg>
<div class="b" style="left:63px;top:653.5px;width:71px;height:18.5px;"></div>
<span style="left:67.3px;top:656px;font-size:12px;line-height:14px;color:#e4e4e4;letter-spacing:0.322px;-webkit-text-stroke:0.35px;">Global</span>
<svg style="left:122.6px;top:661.1500000000001px;" width="6.4" height="3.6" viewBox="0 0 6.4 3.6"><path d="M0 0H6.4L3.2 3.6Z" fill="#ddd"/></svg>
<svg style="left:137px;top:0px;" width="1115" height="690" viewBox="0 0 1115 690"><rect x="0" y="664.2" width="1114" height="6.5" fill="#0a0a0a"/><rect x="0" y="665.5" width="1114" height="1.3" fill="#4c4c4c"/><rect x="0" y="668.2" width="1114" height="1.3" fill="#464646"/><path d="M10.50 662.2V666 M21.55 662.2V666 M32.60 662.2V666 M43.65 662.2V666 M54.70 662.2V666 M65.75 662.2V666 M76.80 662.2V666 M87.85 662.2V666 M98.90 662.2V666 M109.95 657.7V666 M121.01 662.2V666 M132.06 662.2V666 M143.11 662.2V666 M154.16 662.2V666 M165.21 662.2V666 M176.26 662.2V666 M187.31 662.2V666 M198.36 662.2V666 M209.41 662.2V666 M220.46 657.7V666 M231.51 662.2V666 M242.56 662.2V666 M253.61 662.2V666 M264.66 662.2V666 M275.71 662.2V666 M286.76 662.2V666 M297.81 662.2V666 M308.86 662.2V666 M319.91 662.2V666 M330.96 657.7V666 M342.02 662.2V666 M353.07 662.2V666 M364.12 662.2V666 M375.17 662.2V666 M386.22 662.2V666 M397.27 662.2V666 M408.32 662.2V666 M419.37 662.2V666 M430.42 662.2V666 M441.47 657.7V666 M452.52 662.2V666 M463.57 662.2V666 M474.62 662.2V666 M485.67 662.2V666 M496.72 662.2V666 M507.77 662.2V666 M518.82 662.2V666 M529.87 662.2V666 M540.92 662.2V666 M551.97 657.7V666 M563.03 662.2V666 M574.08 662.2V666 M585.13 662.2V666 M596.18 662.2V666 M607.23 662.2V666 M618.28 662.2V666 M629.33 662.2V666 M640.38 662.2V666 M651.43 662.2V666 M662.48 657.7V666 M673.53 662.2V666 M684.58 662.2V666 M695.63 662.2V666 M706.68 662.2V666 M717.73 662.2V666 M728.78 662.2V666 M739.83 662.2V666 M750.88 662.2V666 M761.93 662.2V666 M772.98 657.7V666 M784.04 662.2V666 M795.09 662.2V666 M806.14 662.2V666 M817.19 662.2V666 M828.24 662.2V666 M839.29 662.2V666 M850.34 662.2V666 M861.39 662.2V666 M872.44 662.2V666 M883.49 657.7V666 M894.54 662.2V666 M905.59 662.2V666 M916.64 662.2V666 M927.69 662.2V666 M938.74 662.2V666 M949.79 662.2V666 M960.84 662.2V666 M971.89 662.2V666 M982.94 662.2V666 M993.99 657.7V666 M1005.05 662.2V666 M1016.10 662.2V666 M1027.15 662.2V666 M1038.20 662.2V666 M1049.25 662.2V666 M1060.30 662.2V666 M1071.35 662.2V666 M1082.40 662.2V666 M1093.45 662.2V666 M1104.50 657.7V666 " stroke="#5c5c5c" stroke-width="1.1" fill="none"/></svg>
<span style="left:241.55454545454543px;top:669px;font-size:10.5px;line-height:12px;color:#f2f2f2;font-weight:700;letter-spacing:-0.588px;text-shadow:0 0 1.5px #000;">10</span>
<span style="left:352.059595959596px;top:669px;font-size:10.5px;line-height:12px;color:#f2f2f2;font-weight:700;letter-spacing:-0.588px;text-shadow:0 0 1.5px #000;">20</span>
<span style="left:462.5646464646465px;top:669px;font-size:10.5px;line-height:12px;color:#f2f2f2;font-weight:700;letter-spacing:-0.588px;text-shadow:0 0 1.5px #000;">30</span>
<span style="left:573.069696969697px;top:669px;font-size:10.5px;line-height:12px;color:#f2f2f2;font-weight:700;letter-spacing:-0.587px;text-shadow:0 0 1.5px #000;">40</span>
<span style="left:683.5747474747475px;top:669px;font-size:10.5px;line-height:12px;color:#f2f2f2;font-weight:700;letter-spacing:-0.587px;text-shadow:0 0 1.5px #000;">50</span>
<span style="left:794.0797979797981px;top:669px;font-size:10.5px;line-height:12px;color:#f2f2f2;font-weight:700;letter-spacing:-0.587px;text-shadow:0 0 1.5px #000;">60</span>
<span style="left:904.5848484848485px;top:669px;font-size:10.5px;line-height:12px;color:#f2f2f2;font-weight:700;letter-spacing:-0.587px;text-shadow:0 0 1.5px #000;">70</span>
<span style="left:1015.089898989899px;top:669px;font-size:10.5px;line-height:12px;color:#f2f2f2;font-weight:700;letter-spacing:-0.588px;text-shadow:0 0 1.5px #000;">80</span>
<span style="left:1125.5949494949496px;top:669px;font-size:10.5px;line-height:12px;color:#f2f2f2;font-weight:700;letter-spacing:-0.587px;text-shadow:0 0 1.5px #000;">90</span>
<span style="left:145.3px;top:669px;font-size:10.5px;line-height:12px;color:#d4d4d4;letter-spacing:0.000px;">1</span>
<span style="left:1233.9px;top:669px;font-size:10.5px;line-height:12px;color:#f4f4f4;font-weight:700;letter-spacing:-0.716px;text-shadow:0 0 1.5px #000;">100</span>
<div style="left:51px;top:681.2px;width:1201px;height:1.7999999999999545px;background:#232323;"></div>
<div style="left:51px;top:683px;width:1201px;height:1px;background:#3a3a3a;"></div>
<svg style="left:140px;top:647px;" width="18" height="34" viewBox="0 0 18 34"><path d="M8.300 9.500V25.500" stroke="#a0a0a0" stroke-width="0.900"/><path d="M1 9H8.500V17.500Z" fill="#f59b20"/><path d="M8.300 9H14.600L12.500 12.500L16.700 17.300H8.300Z" fill="#de4a22"/><path d="M3.500 10.500L8.300 15.500V17.300Z" fill="#f9c04a"/></svg>
<span style="left:145.3px;top:646px;font-size:10px;line-height:11px;color:#f0901e;font-weight:700;letter-spacing:0.000px;">1</span>
<svg style="left:1230px;top:655px;" width="14" height="20" viewBox="0 0 14 20"><path d="M11.800 2V18" stroke="#8a8a8a" stroke-width="0.800"/><path d="M1.800 9.200H12V2.200Z" fill="#e0482a"/></svg>
<span style="left:1233.5px;top:646px;font-size:10px;line-height:11px;color:#d9472b;font-weight:700;letter-spacing:-0.094px;">100</span>
<div style="left:51px;top:684px;width:1201px;height:21px;background:#2d2d2d;"></div>
<div style="left:51px;top:704.5px;width:1201px;height:1.0px;background:#3e3e3e;"></div>
<div style="left:168px;top:688px;width:96px;height:17px;background:#292929;border:1px solid #1c1c1c;border-bottom:none;border-radius:3px 3px 0 0;"></div>
<div style="left:263px;top:688px;width:92px;height:17px;background:#292929;border:1px solid #1c1c1c;border-bottom:none;border-radius:3px 3px 0 0;"></div>
<div style="left:75px;top:686px;width:93px;height:20px;background:#323232;border-radius:4px 4px 0 0;box-shadow:0 0 0 1px #1d1d1d;"></div>
<div style="left:74px;top:705.5px;width:95px;height:1.5px;background:#323232;"></div>
<div style="left:52.5px;top:685.5px;width:19.0px;height:19.0px;background:#262626;border-radius:1px;"></div>
<div style="left:54px;top:687px;width:16px;height:16px;background:#4d4d4d;"></div>
<div style="left:54px;top:687px;width:9px;height:9px;background:#b6b6b6;"></div>
<div style="left:54px;top:696px;width:9px;height:7px;background:#838383;"></div>
<span style="left:86.7px;top:690px;font-size:11.5px;line-height:12px;color:#ececec;letter-spacing:0.660px;-webkit-text-stroke:0.5px;">Node Graph</span>
<span style="left:180px;top:691px;font-size:11.5px;line-height:12px;color:#ececec;letter-spacing:0.671px;-webkit-text-stroke:0.5px;">Curve Editor</span>
<span style="left:276px;top:691px;font-size:11.5px;line-height:12px;color:#ececec;letter-spacing:0.750px;-webkit-text-stroke:0.5px;">Dope Sheet</span>
<svg style="left:1222px;top:689.5px;" width="8" height="9" viewBox="0 0 8 9"><path d="M2.5 0.7H7.3V5.0H5.6M0.7 3.2H5.5V8.2H0.7Z" fill="none" stroke="#050505" stroke-width="1.5"/></svg>
<svg style="left:1237.3px;top:690.2px;" width="8" height="8" viewBox="0 0 8 8"><path d="M0.500 0.500L7.500 6.900M7.500 0.500L0.500 6.900" stroke="#050505" stroke-width="1.600"/></svg>
<svg style="left:600px;top:870px;" width="110" height="70" viewBox="0 0 110 70"><path d="M28 9L40.500 30.500" stroke="#0a0a0a" stroke-width="2.800" stroke-dasharray="1.900 1.600"/><path d="M46.500 41L38 32.500L41.500 31L40.500 26.500L45.500 29.500Z" fill="#050505"/><path d="M13.500 42H90.500L94.500 50.500L90.500 59.500H13.500L9.500 50.500Z" fill="#000" opacity="0.500" transform="translate(0.800,1.200)"/><path d="M13.500 42H90.500L94.500 50.500L90.500 59.500H13.500L9.500 50.500Z" fill="#d9d9d9" stroke="#0a0a0a" stroke-width="1"/></svg>
<span style="left:635.8px;top:896px;font-size:9px;line-height:10px;color:#37c93c;font-weight:700;letter-spacing:0.000px;">1</span>
<span style="left:634px;top:916px;font-size:9.5px;line-height:11px;color:#0a0a0a;letter-spacing:0.107px;-webkit-text-stroke:0.25px;">Viewer1</span>
<div style="left:1255px;top:45px;width:664px;height:21px;background:#313131;"></div>
<div style="left:1255px;top:64.5px;width:664px;height:1.0px;background:#3c3c3c;"></div>
<div style="left:1361px;top:48.5px;width:95px;height:16.5px;background:#2a2a2a;border:1px solid #1c1c1c;border-bottom:none;border-radius:3px 3px 0 0;"></div>
<div style="left:1279px;top:46px;width:82px;height:20px;background:#323232;border-radius:4px 4px 0 0;box-shadow:0 0 0 1px #1d1d1d;"></div>
<div style="left:1278px;top:65px;width:84px;height:2px;background:#323232;"></div>
<div style="left:1256.5px;top:45.5px;width:19.0px;height:19.0px;background:#262626;border-radius:1px;"></div>
<div style="left:1258px;top:47px;width:16px;height:16px;background:#4d4d4d;"></div>
<div style="left:1258px;top:47px;width:9px;height:9px;background:#b6b6b6;"></div>
<div style="left:1258px;top:56px;width:9px;height:7px;background:#838383;"></div>
<span style="left:1290.6px;top:50px;font-size:11.5px;line-height:12px;color:#ececec;letter-spacing:0.709px;-webkit-text-stroke:0.5px;">Properties</span>
<span style="left:1373.5px;top:51px;font-size:11.5px;line-height:12px;color:#ececec;letter-spacing:0.738px;-webkit-text-stroke:0.5px;">Script Editor</span>
<svg style="left:1890.4px;top:49.3px;" width="8" height="9" viewBox="0 0 8 9"><path d="M2.5 0.7H7.3V5.0H5.6M0.7 3.2H5.5V8.2H0.7Z" fill="none" stroke="#050505" stroke-width="1.5"/></svg>
<svg style="left:1905.7px;top:50.0px;" width="8" height="8" viewBox="0 0 8 8"><path d="M0.500 0.500L7.500 6.900M7.500 0.500L0.500 6.900" stroke="#050505" stroke-width="1.600"/></svg>
<div style="left:1261px;top:71.5px;width:28px;height:16.5px;background:#4b4b4b;border:1px solid #262626;border-radius:2px;"></div>
<span style="left:1264.4px;top:73px;font-size:12px;line-height:14px;color:#e8e8e8;letter-spacing:0.000px;-webkit-text-stroke:0.35px;">3</span>
<svg style="left:1295.5px;top:73px;" width="15" height="13" viewBox="0 0 15 13"><rect x="0.600" y="5.600" width="9.800" height="6.800" rx="0.800" fill="#000"/><path d="M7.600 6V3.800A2.700 2.700 0 0 1 13 3.800V5.200" fill="none" stroke="#000" stroke-width="1.700"/><rect x="5" y="8" width="1" height="2.200" fill="#3a3a3a"/></svg>
<svg style="left:1315px;top:75.5px;" width="15" height="9.5" viewBox="0 0 15 9.5"><path d="M0.300 1H8M0.300 4.500H7M0.300 8H8" stroke="#f2f2f2" stroke-width="1.500"/><path d="M6.800 0.600L13.800 8.800M13.800 0.600L6.800 8.800" stroke="#f2f2f2" stroke-width="1.700"/></svg>
<svg style="left:1746px;top:46px;" width="122" height="122" viewBox="0 0 122 122"><circle cx="60.500" cy="60" r="57.300" fill="none" stroke="#4a4a4a" stroke-width="2.300"/><path d="M60.500 14C64 20 71 30 76 40C81 50 86 62 87.500 69L78 93L62.500 99.500L62 106H58.800L58.500 99.500L43 93L33.500 69C35 62 40 50 45 40C50 30 57 20 60.500 14Z" fill="#4a4a4a"/><g fill="none" stroke="#323232" stroke-width="1.300" stroke-linecap="round" stroke-linejoin="round"><path d="M57 29V52L52.500 58V79L57 84.500V94"/><path d="M64.500 29V52L69 58V79L64.500 84.500V94"/><path d="M53.500 41.500V47L49 54V63.500"/><path d="M68 41.500V47L72.500 54V63.500"/><path d="M48 35V39.500"/><path d="M73.500 35V39.500"/><path d="M39 56L42 60V70L45.500 75"/><path d="M82.500 56L79.500 60V70L76 75"/><path d="M35 72L50 86"/><path d="M86.500 72L71.500 86"/></g><circle cx="57" cy="29" r="1.300" fill="#323232"/><circle cx="64.5" cy="29" r="1.300" fill="#323232"/><circle cx="53.5" cy="41.5" r="1.300" fill="#323232"/><circle cx="68" cy="41.5" r="1.300" fill="#323232"/><circle cx="48" cy="39.5" r="1.300" fill="#323232"/><circle cx="73.5" cy="39.5" r="1.300" fill="#323232"/><circle cx="49" cy="63.5" r="1.300" fill="#323232"/><circle cx="72.5" cy="63.5" r="1.300" fill="#323232"/><circle cx="45.5" cy="75" r="1.300" fill="#323232"/><circle cx="76" cy="75" r="1.300" fill="#323232"/><circle cx="50" cy="86" r="1.300" fill="#323232"/><circle cx="71.5" cy="86" r="1.300" fill="#323232"/><circle cx="57" cy="94" r="1.300" fill="#323232"/><circle cx="64.5" cy="94" r="1.300" fill="#323232"/><circle cx="52.5" cy="68" r="1.300" fill="#323232"/><circle cx="69" cy="68" r="1.300" fill="#323232"/><circle cx="52.5" cy="72.5" r="1.300" fill="#323232"/><circle cx="69" cy="72.5" r="1.300" fill="#323232"/></svg>
<div style="left:1902px;top:110px;width:15px;height:970px;background:#313131;border:1px solid #474747;border-bottom:none;"></div>
<div style="left:1902px;top:93px;width:15px;height:15.5px;background:#3a3a3a;border:1px solid #4c4c4c;border-radius:2px;"></div>
<svg style="left:1905px;top:98px;" width="9" height="5" viewBox="0 0 9 5"><path d="M0 5H9L4.500 0.300Z" fill="#f2f2f2"/></svg>
<svg style="left:1904px;top:593px;" width="12" height="22" viewBox="0 0 12 22"><defs><pattern id="hp" width="3" height="3" patternUnits="userSpaceOnUse" patternTransform="rotate(45)"><rect width="1.500" height="3" fill="#262626"/></pattern></defs><rect width="12" height="22" fill="url(#hp)"/></svg>
<div style="left:1917px;top:45px;width:2px;height:1035px;background:#2a2a2a;"></div>
<div style="left:827px;top:509px;width:305.5px;height:203.5px;border-radius:5px 5px 3px 3px;box-shadow:0 20px 38px 6px rgba(0,0,0,0.480),0 4px 12px 1px rgba(0,0,0,0.350),0 0 0 0.500px rgba(0,0,0,0.600);background:#292929;"></div>
<div style="left:827px;top:509px;width:305.5px;height:22px;border-radius:5px 5px 0 0;background:linear-gradient(#f7f7f7,#ececec 35%,#d6d6d6);"></div>
<div style="left:827px;top:531px;width:305.5px;height:1px;background:#161616;"></div>
<div style="left:834.9px;top:514.0px;width:12.400px;height:12.400px;border-radius:7px;background:#8e8e92;border:1px solid #7d7d81;"></div>
<div style="left:855.0999999999999px;top:514.0px;width:12.400px;height:12.400px;border-radius:7px;background:#8e8e92;border:1px solid #7d7d81;"></div>
<div style="left:875.5px;top:514.0px;width:12.400px;height:12.400px;border-radius:7px;background:#8e8e92;border:1px solid #7d7d81;"></div>
<div style="left:901.500px;top:512.700px;width:15px;height:15px;border-radius:8px;background:#e9e9e9;border:1px solid #cfcfcf;"></div>
<div style="left:905.500px;top:518.500px;width:7px;height:3.400px;border-radius:2px;background:#bdbdbd;"></div>
<span style="left:921.7px;top:513px;font-size:13px;line-height:15px;color:#474747;letter-spacing:0.562px;">recentNodes settings</span>
<div style="left:838.5px;top:543.5px;width:282.0px;height:111.5px;background:#272727;border:1px solid #1a1a1a;border-radius:2px;"></div>
<div style="left:849px;top:556.5px;width:13px;height:13.0px;background:#202020;border-radius:1px;"></div>
<svg style="left:851px;top:558px;" width="10" height="10" viewBox="0 0 10 10"><path d="M1.300 1.300L8.700 8.700M8.700 1.300L1.300 8.700" stroke="#f2f2f2" stroke-width="2.600"/></svg>
<div style="left:864px;top:553.500px;width:110px;height:18px;border:1px dotted #c4c4c4;border-radius:1px;"></div>
<span style="left:867.3px;top:558px;font-size:11.5px;line-height:12px;color:#f2f2f2;letter-spacing:0.700px;-webkit-text-stroke:0.35px;">save recentNodes</span>
<span style="left:849.5px;top:582px;font-size:11.5px;line-height:12px;color:#ececec;letter-spacing:0.811px;-webkit-text-stroke:0.35px;">number of recent nodes</span>
<div style="left:994.5px;top:579.5px;width:115.5px;height:19.5px;background:#242424;border:1px solid #1b1b1b;border-radius:2px;"></div>
<span style="left:998.8px;top:583px;font-size:12px;line-height:14px;color:#f0f0f0;letter-spacing:-0.459px;-webkit-text-stroke:0.35px;">10</span>
<svg style="left:1010.5px;top:587px;" width="9" height="18" viewBox="0 0 9 18"><path d="M1.300 0.800C3 0.800 4.300 1.600 4.300 3.200V14.300C4.300 15.900 3 16.700 1.300 16.700M7.300 0.800C5.600 0.800 4.300 1.600 4.300 3.200M4.300 14.300C4.300 15.900 5.600 16.700 7.300 16.700M3 9.500H5.600" fill="none" stroke="#6a6a6a" stroke-width="2.300" opacity="0.800"/><path d="M1.300 0.800C3 0.800 4.300 1.600 4.300 3.200V14.300C4.300 15.900 3 16.700 1.300 16.700M7.300 0.800C5.600 0.800 4.300 1.600 4.300 3.200M4.300 14.300C4.300 15.900 5.600 16.700 7.300 16.700M3 9.500H5.600" fill="none" stroke="#101010" stroke-width="0.900"/></svg>
<div style="left:852px;top:611.3px;width:255px;height:30.5px;background:#2c8db0;border:1px solid #1c6f8f;border-radius:1px;"></div>
<span style="left:909.5px;top:621px;font-size:11.5px;line-height:12px;color:#c5e3ee;letter-spacing:0.668px;-webkit-text-stroke:0.35px;">flush recent nodes NOW</span>
<div style="left:841.3px;top:668.8px;width:277.5px;height:28.700000000000045px;background:#242424;border-radius:2px;"></div>
<span style="left:963.8px;top:678px;font-size:11.5px;line-height:12px;color:#e6e6e6;letter-spacing:0.573px;-webkit-text-stroke:0.5px;">Close</span>
<svg style="left:0px;top:0px;" width="50" height="800" viewBox="0 0 50 800"><rect x="14.7" y="59.4" width="20.9" height="1.8" fill="#d6d6d6"/><rect x="14.7" y="74" width="20.9" height="1.9" fill="#cfcfcf"/><rect x="14.7" y="62.6" width="20.9" height="9.8" fill="#ababab"/><rect x="14.7" y="63.4" width="9" height="1.2" fill="#d4d4d4"/><rect x="14.7" y="70.4" width="9" height="1.2" fill="#d4d4d4"/><path d="M14.7 67.4H27" stroke="#141414" stroke-width="1.9"/><path d="M23.3 63.8L27.6 67.4L23.3 71" fill="none" stroke="#141414" stroke-width="1.9"/><path d="M25.2 93.6Q25.8 92.8 26.6 93.6L33.4 100.4Q34.2 101.2 33.4 102L30.2 104.6L22.6 97.6Z" fill="#c2c2c2"/><path d="M21.9 98.6L29.4 105.4L22.6 108.8L18.2 105Z" fill="#b8b8b8"/><path d="M17.7 106.2L20.9 109.1L16.2 111Z" fill="#c8c8c8"/><circle cx="25.2" cy="136.5" r="9.3" fill="none" stroke="#b8b8b8" stroke-width="1.8"/><path d="M22 134L25.4 137.2L30 132.3" fill="none" stroke="#c4c4c4" stroke-width="1.9"/><rect x="14.9" y="163.4" width="20.6" height="4.60" rx="1.2" fill="#b8b8b8"/><rect x="16" y="165.00" width="18.400" height="1.400" fill="#cdcdcd"/><rect x="14.9" y="169.2" width="20.6" height="4.60" rx="1.2" fill="#b8b8b8"/><rect x="16" y="170.80" width="18.400" height="1.400" fill="#cdcdcd"/><rect x="14.9" y="175.2" width="20.6" height="4.80" rx="1.2" fill="#b8b8b8"/><rect x="16" y="176.90" width="18.400" height="1.400" fill="#cdcdcd"/><circle cx="25.2" cy="206.2" r="9.300" fill="#bababa"/><path d="M25.2 206.2V196.500M25.2 206.2L16.500 209.800M25.2 206.2L33.900 209.800" stroke="#252525" stroke-width="1.400"/><circle cx="25.2" cy="240.5" r="9.400" fill="#6f6f6f" stroke="#bcbcbc" stroke-width="1.600"/><path d="M15 270.700V285.600H33.800Z" fill="#b8b8b8"/><path d="M31.900 265.800L21 282.300" stroke="#323232" stroke-width="4.600" stroke-linecap="round"/><path d="M31.600 266.300L27.800 272" stroke="#c6c6c6" stroke-width="2.800" stroke-linecap="round"/><path d="M26 270.300L30.200 273.100" stroke="#c6c6c6" stroke-width="1.600"/><path d="M27.600 272.500L21.300 281.900" stroke="#bdbdbd" stroke-width="1.700" stroke-linecap="round"/><path d="M25.400 301.800L35.300 305.800L25.400 309.900L15.600 305.800Z" fill="#c9c9c9"/><path d="M15.600 309.400L18 308.400L25.400 311.500L32.900 308.400L35.300 309.400L25.400 314.500Z" fill="#b8b8b8"/><path d="M15.600 314.200L18 313.200L25.400 316.300L32.900 313.200L35.300 314.200L25.400 319.300Z" fill="#b8b8b8"/><g fill="none" stroke="#1c1c1c" stroke-width="3.400" opacity="0.700"><path d="M25.400 336V354M16.500 345H34.300"/></g><g fill="none" stroke="#c4c4c4" stroke-width="1.500"><path d="M25.400 335.600V354.400M16 345H34.800"/><path d="M21.800 339L25.400 335.300L29 339M21.800 351L25.400 354.700L29 351M19.500 341.400L15.800 345L19.500 348.600M31.300 341.400L35 345L31.300 348.600" stroke-width="1.700"/></g><path d="M24.400 368.800L35.500 371.600L26.700 375.600L14.700 373.200Z" fill="#c6c6c6"/><path d="M14.700 374.200L26.100 376.700V390L14.700 386.400Z" fill="#b6b6b6"/><path d="M27.300 376.600L35.500 372.700V384.400L27.300 389.500Z" fill="#bdbdbd"/><path d="M27.900 376.600V389" stroke="#d8d8d8" stroke-width="1"/><circle cx="25.400" cy="414.100" r="1.700" fill="#c8c8c8"/><circle cx="25.40" cy="418.80" r="1.25" fill="#b4b4b4"/><circle cx="25.40" cy="422.40" r="0.8" fill="#7e7e7e"/><circle cx="21.33" cy="416.45" r="1.25" fill="#b4b4b4"/><circle cx="18.21" cy="418.25" r="0.8" fill="#7e7e7e"/><circle cx="21.33" cy="411.75" r="1.25" fill="#b4b4b4"/><circle cx="18.21" cy="409.95" r="0.8" fill="#7e7e7e"/><circle cx="25.40" cy="409.40" r="1.25" fill="#b4b4b4"/><circle cx="25.40" cy="405.80" r="0.8" fill="#7e7e7e"/><circle cx="29.47" cy="411.75" r="1.25" fill="#b4b4b4"/><circle cx="32.59" cy="409.95" r="0.8" fill="#7e7e7e"/><circle cx="29.47" cy="416.45" r="1.25" fill="#b4b4b4"/><circle cx="32.59" cy="418.25" r="0.8" fill="#7e7e7e"/><circle cx="25.200" cy="449.100" r="10.100" fill="#bababa"/><path d="M21.600 444.300H25.300A4.300 4.800 0 0 1 25.300 453.900H21.600Z" fill="none" stroke="#262626" stroke-width="2.600" stroke-linejoin="round"/><path d="M15 483.500C19.500 475.800 31 475.800 35.400 483.500C31 491.200 19.500 491.200 15 483.500Z" fill="#bdbdbd"/><circle cx="25.200" cy="483.500" r="4.100" fill="#2b2b2b"/><circle cx="25.200" cy="483.500" r="2.300" fill="#454545"/><path d="M34.900 514.300L35.400 517L29.800 528.900L25.500 527.600Z" fill="#cfcfcf"/><path d="M15 518.500L26.500 507.800L31.500 507.100Q34.300 507.600 34.400 510.300L34.200 512.800L24.500 527.300Z" fill="#bcbcbc" stroke="#2c2c2c" stroke-width="0.700"/><circle cx="31.500" cy="510" r="1" fill="#1e1e1e"/><path d="M26 563.800V553.500C23.500 552 21.800 549 22.600 546C23 544.600 23.800 543.600 24.600 543L25.600 548.200L28.800 549.800L32 548.200L32.400 542.800C34.200 543.800 35.600 546 35.400 548.500C35.200 551 33.600 552.800 31.600 553.500V563.800Z" fill="#bebebe"/><path d="M17.600 563.800V559.500C15.600 558.600 14.500 556.500 14.800 554.500C15 553.400 15.500 552.600 16.200 552L17.200 555.200L20 556.400L22.600 555.200L23.400 552.200C24.400 553 25 554.300 24.800 555.800C24.600 557.600 23.600 558.800 22.500 559.500V563.800Z" fill="#b2b2b2"/><path d="M18.700 581.300H32L34 585.800H16.700Z" fill="#2a2a2a" stroke="#c0c0c0" stroke-width="1.300" stroke-linejoin="round"/><rect x="16.100" y="585.800" width="18.500" height="9.800" rx="0.600" fill="#b4b4b4"/><circle cx="25.400" cy="622" r="10.500" fill="none" stroke="#b4b4b4" stroke-width="1.700"/><path d="M26.500 614.500C28.500 617 24.500 619.500 26 622.500C26.800 620.500 28.500 619.500 29 617.500C32 620.500 29.500 623 31 625C31.600 624 32 623.200 32 622.200C33.500 625.500 31.500 629 28.500 629.500C29.500 628.200 29.500 626.800 28.500 625.500C28.200 627.300 27 628.500 25.500 629.600C23 629.600 19.500 628.600 19.300 625C19.800 626 20.800 626.800 21.800 627C20 623.500 23.500 621 23 617.500C24.500 618.500 25 620 24.700 621.500C25.800 619.500 27 617.500 26.500 614.500Z" fill="#b0b0b0"/><path d="M14.200 645.400C20 645 28 645.800 32.500 648.400C35.200 650.200 36 653 35 656.500C33.500 661 29 665.500 24.300 666.700C20 666.500 17.500 663 16.700 659.600C15.500 655 15 650 14.200 645.400Z" fill="#bebebe"/><path d="M29.200 661.200C31 663 32.200 665.500 31.800 669" fill="none" stroke="#c8c8c8" stroke-width="1.700" stroke-linecap="round"/></svg>
<div style="left:14.2px;top:680.7px;width:21.8px;height:21.799999999999955px;background:#3a3a3a;"></div>
<svg style="left:14.2px;top:680.7px;" width="22" height="22" viewBox="0 0 22 22"><path d="M4.500 13.200V6.500A2.800 2.800 0 0 1 10.100 6.500V10.300" fill="none" stroke="#d2d2d2" stroke-width="3.200" stroke-linecap="round"/><path d="M10.100 8V15.300A3.500 3.500 0 0 0 17.100 15.300V7.600" fill="none" stroke="#e2661e" stroke-width="3.200" stroke-linecap="round"/></svg>
<div style="left:12.6px;top:714.3px;width:25.0px;height:23.90000000000009px;background:linear-gradient(135deg,#8c4c34,#55291d 40%,#96553b 72%,#60311f);"></div>
<svg style="left:12.6px;top:714.3px;" width="25" height="24" viewBox="0 0 25 24"><path d="M12.800 2.500C15 6.500 20.300 10 20.300 14.800A7.500 7 0 0 1 5.300 14.800C5.300 10 10.600 6.500 12.800 2.500Z" fill="#1f0f0b" stroke="#d9c6b4" stroke-width="1.500"/><path d="M12.800 8.500C14.300 11 16.800 13 16.800 15.400A4 3.800 0 0 1 8.800 15.400C8.800 13 11.300 11 12.800 8.500Z" fill="#4c2519"/><path d="M10 15L11.500 12.500" stroke="#e8dcd0" stroke-width="0.900"/></svg>
<svg style="left:12.4px;top:748.6px;" width="26" height="26" viewBox="0 0 26 26"><circle cx="13" cy="13" r="11.900" fill="#070707" stroke="#b6b6b6" stroke-width="1.400"/><path d="M15.500 10L4 9.500A10 10 0 0 1 12.500 2.600ZM15.500 10L15.500 2.800A10.500 10.500 0 0 1 23.300 8.500ZM15.500 10L22.500 17A10.500 10.500 0 0 1 17.500 22.500Z" fill="#c4c4c4"/><circle cx="15.500" cy="10" r="1.500" fill="#070707"/></svg>
</body></html>
